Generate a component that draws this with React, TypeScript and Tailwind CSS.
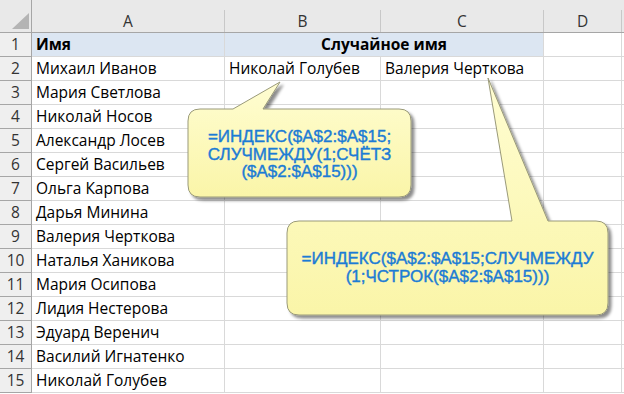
import React from "react";

const names = [
  "Михаил Иванов",
  "Мария Светлова",
  "Николай Носов",
  "Александр Лосев",
  "Сергей Васильев",
  "Ольга Карпова",
  "Дарья Минина",
  "Валерия Черткова",
  "Наталья Ханикова",
  "Мария Осипова",
  "Лидия Нестерова",
  "Эдуард Веренич",
  "Василий Игнатенко",
  "Николай Голубев",
];

const cell = "border-r border-b border-[#d9d9d9] flex items-end px-[4px] whitespace-nowrap overflow-visible";
const rowHead = "border-r border-b border-[#a6a6a6] bg-[#efefef] flex items-end justify-center text-[#333]";

function Callout({ d }: { d: string }) {
  return (
    <path
      d={d}
      fill="url(#noteFill)"
      stroke="#9a9a7a"
      strokeWidth="1"
      filter="url(#noteShadow)"
    />
  );
}

export default function App() {
  return (
    <div className="relative w-[624px] h-[394px] overflow-hidden bg-white text-[15.5px] text-black" style={{ fontFamily: '"Open Sans", sans-serif' }}>
      <div className="grid grid-cols-[32px_193px_156px_163px_78px_1fr] grid-rows-[33px_repeat(15,24px)]">
        {/* column headers */}
        <div className="border-r border-b border-[#a6a6a6] bg-[#e9e9e9] relative">
          <div className="absolute left-[12px] top-[13px] w-0 h-0 border-l-[17px] border-l-transparent border-b-[16px] border-b-[#b4b4b4]" />
        </div>
        {["A", "B", "C", "D", ""].map((c, i) => (
          <div key={i} className="bg-[#e9e9e9] border-b border-[#a6a6a6] flex pt-[10px]">
            <div className="flex-1 border-r border-[#c8c8c8] flex items-center justify-center text-[#333] pt-[1px]">{c}</div>
          </div>
        ))}

        {/* row 1 */}
        <div className={rowHead}>1</div>
        <div className={`${cell} bg-[#dce6f2] font-bold`}>Имя</div>
        <div className={`${cell} col-span-2 bg-[#dce6f2] font-bold justify-center`}>Случайное имя</div>
        <div className={cell} />
        <div className={cell} />

        {names.map((n, i) => (
          <React.Fragment key={i}>
            <div className={rowHead}>{i + 2}</div>
            <div className={cell}>{n}</div>
            <div className={cell}>{i === 0 ? "Николай Голубев" : ""}</div>
            <div className={cell}>{i === 0 ? "Валерия Черткова" : ""}</div>
            <div className={cell} />
            <div className={cell} />
          </React.Fragment>
        ))}
      </div>

      {/* callouts */}
      <svg className="absolute inset-0 pointer-events-none" width="624" height="394">
        <defs>
          <linearGradient id="noteFill" x1="0" y1="0" x2="0" y2="1">
            <stop offset="0" stopColor="#fffdd2" />
            <stop offset="1" stopColor="#faf5a8" />
          </linearGradient>
          <filter id="noteShadow" x="-10%" y="-10%" width="130%" height="130%">
            <feDropShadow dx="3" dy="3" stdDeviation="1.5" floodColor="#000" floodOpacity="0.45" />
          </filter>
        </defs>
        <Callout d="M200,109 L233,109 L280,82 L263,109 L399,109 Q411,109 411,121 L411,185 Q411,197 399,197 L200,197 Q188,197 188,185 L188,121 Q188,109 200,109 Z" />
        <Callout d="M299,221 L512,221 L488,78 L548,221 L596,221 Q608,221 608,233 L608,303 Q608,315 596,315 L299,315 Q287,315 287,303 L287,233 Q287,221 299,221 Z" />
      </svg>
      <div
        className="absolute left-[188px] top-[128px] w-[223px] text-center text-[17px] leading-[17.5px] text-[#1c7cd5] [-webkit-text-stroke:0.4px_#1c7cd5]"
        style={{ fontFamily: '"Liberation Sans", Arial, sans-serif' }}
      >
        =ИНДЕКС($A$2:$A$15;<br />СЛУЧМЕЖДУ(1;СЧЁТЗ<br />($A$2:$A$15)))
      </div>
      <div
        className="absolute left-[287px] top-[250px] w-[321px] text-center text-[17px] leading-[18px] text-[#1c7cd5] [-webkit-text-stroke:0.4px_#1c7cd5]"
        style={{ fontFamily: '"Liberation Sans", Arial, sans-serif' }}
      >
        =ИНДЕКС($A$2:$A$15;СЛУЧМЕЖДУ<br />(1;ЧСТРОК($A$2:$A$15)))
      </div>
    </div>
  );
}
